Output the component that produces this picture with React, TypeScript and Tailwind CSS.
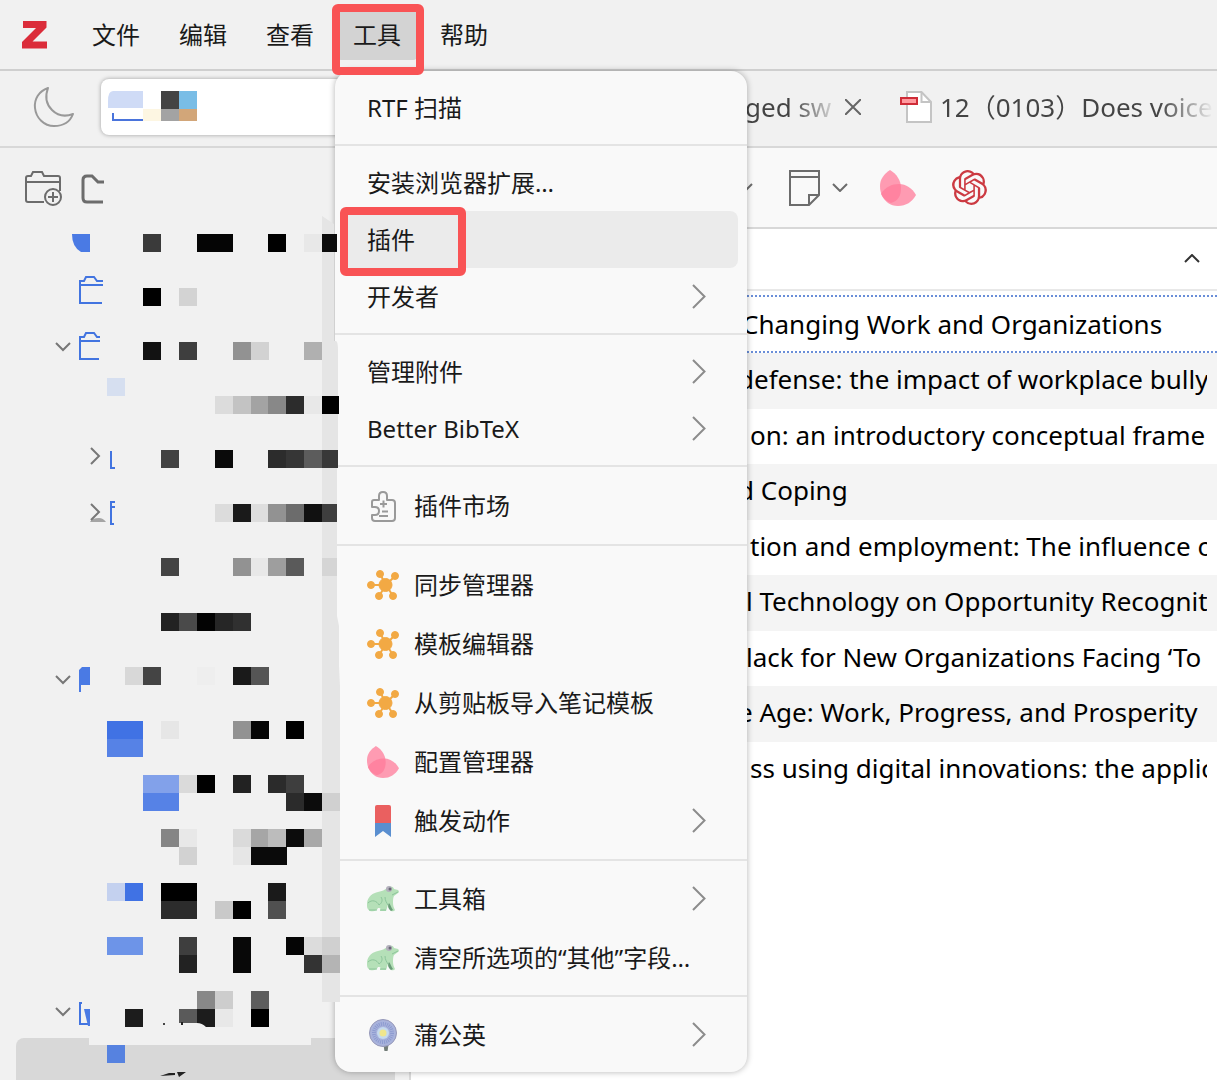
import React from "react";
import { SiOpenai } from "react-icons/si";

type Block = [number, number, number, number, string];
type TreeRow = { chevron?: "down" | "right"; cx?: number; cy?: number; blocks: Block[]; art?: React.ReactNode };

const FONT = "font-['Noto_Sans','Noto_Sans_CJK_SC',sans-serif]";

function ZLogo() {
  return (
    <svg width="26" height="28" viewBox="0 0 26 28" aria-label="Zotero" role="img">
      <path d="M1 0H24.500V6.500L10.500 20.500H25V27.500H0V21L14 7H1Z" fill="#db2c3a" />
    </svg>
  );
}

function Moon() {
  return (
    <svg width="42" height="42" viewBox="0 0 42 42" fill="none" stroke="#999" strokeWidth="2" strokeLinejoin="round">
      <path d="M15 2C6 5 1 13 2 22C3 32 11 40 21 40C30 40 37 36 40 28C32 31 25 30 19 24C13 18 12 10 15 2Z" />
    </svg>
  );
}

function NewCollection() {
  return (
    <svg width="40" height="36" viewBox="0 0 40 36" fill="none" stroke="#6c6c6c" strokeWidth="2">
      <path d="M20 31H4Q2 31 2 29V7Q2 5 4 5H7L9 1H18L20 5H34Q36 5 36 7V20M2 11H36" />
      <circle cx="29" cy="26" r="8" />
      <path d="M29 21V31M24 26H34" />
    </svg>
  );
}

function FolderPart() {
  return (
    <svg width="24" height="30" viewBox="0 0 24 30" fill="none" stroke="#6c6c6c" strokeWidth="3">
      <path d="M22 28H6Q2 28 2 24V6Q2 2 6 2H11L17 8H23" />
    </svg>
  );
}

function PdfIcon() {
  return (
    <svg width="32" height="32" viewBox="0 0 32 32">
      <path d="M7 1H21.500L31 11V31H7Z" fill="#fff" stroke="#c4c4c4" strokeWidth="2" />
      <path d="M21.500 1V11H31" fill="none" stroke="#c4c4c4" strokeWidth="2" />
      <rect x="1" y="7" width="16" height="6" fill="#ff9a9f" stroke="#cf2c38" strokeWidth="2" />
    </svg>
  );
}

function NoteIcon() {
  return (
    <svg width="31" height="36" viewBox="0 0 31 36" fill="none" stroke="#6c6c6c" strokeWidth="2">
      <path d="M1 1H30V25L20 35H1ZM1 7H30M20 35V25H30" />
    </svg>
  );
}

function Petals({ className }: { className: string }) {
  return (
    <svg className={className} viewBox="0 0 36 36">
      <path d="M10 0C17 4 21 11 21 18C21 26 18 31 11 33C3 30 0 24 0 16C0 9 4 4 10 0Z" fill="#ff7b9a" fillOpacity="0.75" />
      <path d="M36 25C32 32 26 36 18 36C10 36 5 32 1 24C5 17 12 14 19 14C26 14 32 18 36 25Z" fill="#ff7b9a" fillOpacity="0.75" />
    </svg>
  );
}

function Hub() {
  return (
    <svg width="32" height="32" viewBox="0 0 32 32" fill="#f2a944" stroke="#f2a944">
      <path d="M19 16L4 16M19 16L13 5M19 16L28 7M19 16L12 27M19 16L26 27" strokeWidth="2" />
      <circle cx="18.500" cy="16" r="6.500" />
      <circle cx="4" cy="16" r="3.500" />
      <circle cx="13" cy="5" r="3.500" />
      <circle cx="28" cy="7" r="3.500" />
      <circle cx="12" cy="27" r="3.500" />
      <circle cx="26" cy="27" r="3.500" />
    </svg>
  );
}

function Puzzle() {
  return (
    <svg width="32" height="32" viewBox="0 0 32 32" fill="none" stroke="#9a9a9a" strokeWidth="2" strokeLinejoin="round">
      <path d="M7 10H12V6Q12 2 16 2Q20 2 20 6V10H25Q28 10 28 13V28Q28 31 25 31H8Q5 31 5 28V25H8Q12 25 12 21Q12 17 8 17H5V12Q5 10 7 10Z" />
      <path d="M13 14H20M16.500 10.500V17.500M15 21.500H21M12 26H21" />
    </svg>
  );
}

function Bookmark() {
  return (
    <svg width="32" height="32" viewBox="0 0 32 32">
      <path d="M10 0H22Q24 0 24 2V18H8V2Q8 0 10 0Z" fill="#ea6060" />
      <path d="M8 18H24V32L16 26L8 32Z" fill="#5a8fd0" />
    </svg>
  );
}

function Frog() {
  return (
    <svg width="32" height="32" viewBox="0 0 32 32">
      <path d="M0 20C1 13 6 10 11 9C15 8 18 7 20 5C22 3 26 3 27 6L31 7Q33 9 31 10L27 13C26 15 26 17 26 20C26 23 27 25 28 27Q27 29 24 28C22 26 21 24 21 22C20 24 20 26 19 28H13C14 26 14 25 11 25C10 27 8 29 3 28C1 27 0 25 0 23Z" fill="#b5e0b8" />
      <path d="M1 20C5 16 10 18 12 22M12 22C15 20 16 17 14 14M18 14C18 18 20 20 21 22M2 27H10M13 27H19M25 12L31 9" fill="none" stroke="#8cc59a" strokeWidth="1" />
      <path d="M22 20C24 22 24 25 26 27L24 28C22 26 20 24 22 20Z" fill="#6a9c78" />
      <circle cx="22" cy="6" r="3" fill="#b3b0bc" />
      <circle cx="23" cy="6" r="1.500" fill="#6c6878" />
    </svg>
  );
}

function Dandelion() {
  return (
    <svg width="32" height="32" viewBox="0 0 32 32">
      <path d="M17 26L18 32H20L21 26Z" fill="#737d78" stroke="#737d78" />
      <circle cx="16" cy="14" r="13.500" fill="#a9b3dc" stroke="#9698b8" />
      <circle cx="16" cy="14" r="9" fill="none" stroke="#8d9bd0" strokeWidth="4" strokeDasharray="1 1" />
      <circle cx="16" cy="14" r="6" fill="#c5daee" />
      <circle cx="16" cy="14" r="3.500" fill="#f0e68c" />
    </svg>
  );
}

function Chevron({ dir, className }: { dir: "right" | "down" | "up"; className?: string }) {
  if (dir === "right")
    return (
      <svg className={className} width="14" height="25" viewBox="0 0 14 25" fill="none" stroke="currentColor" strokeWidth="2">
        <path d="M1 1L12.500 12.500L1 24" />
      </svg>
    );
  return (
    <svg className={className} width="16" height="9" viewBox="0 0 16 9" fill="none" stroke="currentColor" strokeWidth="2">
      <path d={dir === "down" ? "M1 1L8 8L15 1" : "M1 8L8 1L15 8"} />
    </svg>
  );
}

const folder = (y: number, w: number) => (
  <path d={`M${78 + w} ${y + 27}H80V${y + 5}H84L86 ${y + 1}H94L97 ${y + 5}H${79 + w}M80 ${y + 9}H${79 + w}`} fill="none" stroke="#4274e0" strokeWidth="2" />
);

const TREE: TreeRow[] = [
  { blocks: [[143, 18, 18, 18, "#3a3a3a"], [197, 18, 36, 18, "#050505"], [268, 18, 18, 18, "#000"], [304, 18, 18, 18, "#e8e8e8"], [322, 18, 15, 18, "#0c0c0c"]], art: <path d="M72 18H90V36H81Q72 31 72 18Z" fill="#4a7ae4" /> },
  { blocks: [[143, 18, 18, 18, "#000"], [179, 18, 18, 18, "#d3d3d3"]], art: folder(6, 24) },
  { chevron: "down", cx: 63, cy: 22, blocks: [[143, 18, 18, 18, "#121212"], [179, 18, 18, 18, "#3e3e3e"], [233, 18, 18, 18, "#929292"], [251, 18, 18, 18, "#d2d2d2"], [304, 18, 18, 18, "#b0b0b0"]], art: folder(8, 21) },
  { blocks: [[107, 0, 18, 18, "#d6dff0"], [215, 18, 18, 18, "#dcdcdc"], [233, 18, 18, 18, "#c3c3c3"], [251, 18, 18, 18, "#a3a3a3"], [268, 18, 18, 18, "#888"], [286, 18, 18, 18, "#2c2c2c"], [304, 18, 18, 18, "#e8e8e8"], [322, 18, 17, 18, "#000"]] },
  { chevron: "right", cx: 95, cy: 24, blocks: [[161, 18, 18, 18, "#424242"], [215, 18, 18, 18, "#0a0a0a"], [268, 18, 18, 18, "#2c2c2c"], [286, 18, 18, 18, "#363636"], [304, 18, 18, 18, "#5c5c5c"], [322, 18, 16, 18, "#383838"]], art: <path d="M111 19V36H115" fill="none" stroke="#4274e0" strokeWidth="2" /> },
  { chevron: "right", cx: 95, cy: 26, blocks: [[215, 18, 18, 18, "#dcdcdc"], [233, 18, 18, 18, "#1a1a1a"], [251, 18, 18, 18, "#dedede"], [268, 18, 18, 18, "#929292"], [286, 18, 18, 18, "#6c6c6c"], [304, 18, 18, 18, "#111"], [322, 18, 15, 18, "#3e3e3e"]], art: <><path d="M115 16H111V38H114M111 21H115" fill="none" stroke="#4274e0" strokeWidth="2" /><path d="M90 36Q92 32 99 32Q103 32 106 36Z" fill="#a5a5a5" /></> },
  { blocks: [[161, 18, 18, 18, "#444"], [233, 18, 18, 18, "#929292"], [251, 18, 18, 18, "#e8e8e8"], [268, 18, 18, 18, "#9e9e9e"], [286, 18, 18, 18, "#5a5a5a"], [322, 18, 15, 18, "#d5d5d5"]] },
  { blocks: [[161, 19, 18, 18, "#222"], [179, 19, 18, 18, "#4a4a4a"], [197, 19, 18, 18, "#030303"], [215, 19, 18, 18, "#262626"], [233, 19, 18, 18, "#303030"]] },
  { chevron: "down", cx: 63, cy: 31, blocks: [[125, 19, 18, 18, "#d8d8d8"], [143, 19, 18, 18, "#444"], [197, 19, 18, 18, "#eee"], [233, 19, 18, 18, "#1a1a1a"], [251, 19, 18, 18, "#555"]], art: <path d="M79 44V22L82 19H90V37H81V44Z" fill="#4a7ae4" /> },
  { blocks: [[107, 19, 36, 18, "#4072e4"], [107, 37, 36, 18, "#5682e6"], [161, 19, 18, 18, "#e6e6e6"], [233, 19, 18, 18, "#929292"], [251, 19, 18, 18, "#050505"], [286, 19, 18, 18, "#000"]] },
  { blocks: [[143, 19, 36, 18, "#82a1ea"], [143, 37, 36, 18, "#5682e6"], [179, 19, 18, 18, "#dadada"], [197, 19, 18, 18, "#000"], [233, 19, 18, 18, "#222"], [268, 19, 18, 18, "#2b2b2b"], [286, 19, 18, 18, "#3e3e3e"], [286, 37, 18, 18, "#2b2b2b"], [304, 37, 18, 18, "#0c0c0c"], [322, 37, 18, 18, "#d0d0d0"]] },
  { blocks: [[161, 19, 18, 18, "#858585"], [179, 19, 18, 18, "#e8e8e8"], [179, 37, 18, 18, "#d2d2d2"], [233, 19, 18, 18, "#dadada"], [251, 19, 18, 18, "#a6a6a6"], [268, 19, 18, 18, "#bcbcbc"], [286, 19, 18, 18, "#0c0c0c"], [304, 19, 18, 18, "#a8a8a8"], [233, 37, 18, 18, "#e6e6e6"], [251, 37, 36, 18, "#0a0a0a"]] },
  { blocks: [[107, 19, 18, 18, "#c4d1ef"], [125, 19, 18, 18, "#4072e4"], [161, 19, 36, 18, "#000"], [161, 37, 36, 18, "#2c2c2c"], [215, 37, 18, 18, "#c9c9c9"], [233, 37, 18, 18, "#000"], [268, 19, 18, 18, "#1a1a1a"], [268, 37, 18, 18, "#505050"]] },
  { blocks: [[107, 19, 36, 18, "#6d94e8"], [179, 19, 18, 18, "#3e3e3e"], [179, 37, 18, 18, "#222"], [233, 19, 18, 36, "#080808"], [286, 19, 18, 18, "#050505"], [304, 19, 18, 18, "#dcdcdc"], [322, 19, 18, 18, "#d0d0d0"], [304, 37, 18, 18, "#333"], [322, 37, 18, 18, "#b4b4b4"]] },
  { chevron: "down", cx: 63, cy: 39, blocks: [[125, 37, 18, 18, "#1c1c1c"], [179, 37, 18, 14, "#5a5a5a"], [197, 19, 18, 18, "#888"], [215, 19, 18, 18, "#cdcdcd"], [215, 37, 18, 18, "#e8e8e8"], [251, 19, 18, 18, "#5e5e5e"], [251, 37, 18, 18, "#000"]], art: <><path d="M82 31H80V52H88" fill="none" stroke="#4274e0" strokeWidth="2" /><path d="M84 37H90V54H88Z" fill="#4a7ae4" /><path d="M197 37H215V55H206Q202 51 197 51Z" fill="#1c1c1c" /><rect x="163" y="51" width="2" height="2" fill="#444" /><rect x="181" y="50" width="2" height="3" fill="#222" /></> },
];

type Item = { label: string; icon?: React.ReactNode; sub?: boolean; active?: boolean };
type Group = { roomy?: boolean; items: Item[] };

const GROUPS: Group[] = [
  { items: [{ label: "RTF 扫描" }] },
  { items: [{ label: "安装浏览器扩展…" }, { label: "插件", active: true }, { label: "开发者", sub: true }] },
  { items: [{ label: "管理附件", sub: true }, { label: "Better BibTeX", sub: true }] },
  { roomy: true, items: [{ label: "插件市场", icon: <Puzzle /> }] },
  {
    roomy: true,
    items: [
      { label: "同步管理器", icon: <Hub /> },
      { label: "模板编辑器", icon: <Hub /> },
      { label: "从剪贴板导入笔记模板", icon: <Hub /> },
      { label: "配置管理器", icon: <Petals className="size-8" /> },
      { label: "触发动作", icon: <Bookmark />, sub: true },
    ],
  },
  { items: [{ label: "工具箱", icon: <Frog />, sub: true }, { label: "清空所选项的“其他”字段…", icon: <Frog /> }] },
  { items: [{ label: "蒲公英", icon: <Dandelion />, sub: true }] },
];

const TITLES: { text: string; indent: string }[] = [
  { text: "Changing Work and Organizations", indent: "pl-1" },
  { text: "defense: the impact of workplace bully", indent: "pl-0" },
  { text: "on: an introductory conceptual frame", indent: "pl-3" },
  { text: "d Coping", indent: "pl-0" },
  { text: "tion and employment: The influence o", indent: "pl-3" },
  { text: "l Technology on Opportunity Recognit", indent: "pl-2" },
  { text: "lack for New Organizations Facing ‘To", indent: "pl-2" },
  { text: "e Age: Work, Progress, and Prosperity", indent: "pl-0" },
  { text: "ss using digital innovations: the applic", indent: "pl-3" },
];

function ToolsMenu() {
  return (
    <div role="menu" aria-label="工具" className="absolute left-[335px] top-[71px] z-10 w-[412px] divide-y-2 divide-[#e4e4e4] rounded-2xl bg-[#f9f9f9] shadow-[0_0_6px_rgba(0,0,0,0.3)]">
      {GROUPS.map((g, i) => (
        <div key={i} className={g.roomy ? "py-[9px]" : "py-2"}>
          {g.items.map((it) => (
            <button
              key={it.label}
              role="menuitem"
              className={`mx-2 flex w-[395px] items-center gap-[15px] rounded-lg pl-6 pr-8 text-left text-2xl text-[#1a1a1a] ${it.icon ? "h-[59px]" : "h-[57px]"} ${it.active ? "bg-[#ebebeb]" : ""}`}
            >
              {it.icon}
              <span className="flex-1 whitespace-nowrap">{it.label}</span>
              {it.sub && <Chevron dir="right" className="text-[#8c8c8c]" />}
            </button>
          ))}
        </div>
      ))}
    </div>
  );
}

function Sidebar() {
  return (
    <aside className="w-[411px] shrink-0 border-r-2 border-[#dadada]">
      <div className="flex h-[68px] items-center gap-[17px] pl-6 pt-[14px]">
        <button aria-label="新建分类"><NewCollection /></button>
        <button aria-label="新建文库"><FolderPart /></button>
      </div>
      <ul className="relative z-20 w-[340px]">
        <svg className="absolute left-0 top-0" width="342" height="790" aria-hidden="true">
          <path d="M322 0L334 8V125H336Q338 125 338 135V240L337 246V400L339 410V450L340 470V786H322Z" fill="#e5e5e5" />
        </svg>
        {TREE.map((row, i) => (
          <li key={i} className="relative h-[54px]">
            <svg className="block overflow-visible" width="340" height="54" aria-hidden="true">
              {row.blocks.map(([x, y, w, h, c], j) => (
                <rect key={j} x={x} y={y} width={w} height={h} fill={c} />
              ))}
              {row.art}
              {row.chevron && row.cx !== undefined && row.cy !== undefined && (
                <path
                  d={row.chevron === "down" ? `M${row.cx - 7} ${row.cy - 3}l7 7l7 -7` : `M${row.cx - 4} ${row.cy - 8}l8 8l-8 8`}
                  fill="none"
                  stroke="#777"
                  strokeWidth="2"
                />
              )}
            </svg>
          </li>
        ))}
      </ul>
      <div className="ml-4 mr-3.5 mt-3 h-[42px] rounded-tl-lg bg-[#d8d8d8]">
        <svg className="block" width="320" height="42" aria-hidden="true">
          <rect x="73" y="0" width="222" height="7" fill="#f1f1f1" />
          <rect x="91" y="7" width="18" height="18" fill="#5682e0" />
          <path d="M144 38L153 35H159V37ZM161 34L170 34L163 39Z" fill="#222" />
        </svg>
      </div>
    </aside>
  );
}

function Items() {
  return (
    <main className="min-w-0 flex-1 bg-white">
      <div className="flex h-[81px] items-center border-b-2 border-[#d8d8d8] bg-[#f9f9f9] pl-[326px]">
        <button aria-label="更多" className="text-[#6c6c6c]"><Chevron dir="down" /></button>
        <button aria-label="新建笔记" className="ml-9 flex items-center gap-3 text-[#6c6c6c]">
          <NoteIcon />
          <Chevron dir="down" />
        </button>
        <button aria-label="样式" className="ml-8"><Petals className="size-9" /></button>
        <button aria-label="GPT" className="ml-9"><SiOpenai className="size-[35px] text-[#cc3a42]" /></button>
      </div>
      <table className="w-full table-fixed border-collapse">
        <thead>
          <tr className="h-[61px] border-b-2 border-[#e8e8e8]">
            <th className="pb-1 pr-[17px] text-right">
              <button aria-label="标题排序"><Chevron dir="up" className="text-[#333]" /></button>
            </th>
          </tr>
        </thead>
        <tbody className="text-[26px] leading-9 text-black">
          {TITLES.map((t, i) => (
            <tr key={t.text} className={i % 2 ? "h-14 bg-[#f4f4f4]" : "h-[55px]"}>
              <td className={i === 0 ? "pt-1" : "pb-1"}>
                <div className={`pl-[327px] pr-2.5 ${i === 0 ? "border-y-2 border-dotted border-[#6a8ed8] py-[9px]" : ""}`}>
                  <div className={`overflow-hidden whitespace-nowrap ${t.indent}`}>{t.text}</div>
                </div>
              </td>
            </tr>
          ))}
        </tbody>
      </table>
    </main>
  );
}

export default function App() {
  return (
    <div className={`relative flex h-screen min-h-[1080px] flex-col overflow-hidden bg-[#f1f1f1] ${FONT}`}>
      <nav className="flex h-[71px] shrink-0 items-center border-b-2 border-[#cfcfcf] pl-[22px] text-2xl text-[#1a1a1a]">
        <ZLogo />
        <div className="ml-7 flex gap-[7px]">
          {["文件", "编辑", "查看", "工具", "帮助"].map((m) => (
            <button key={m} className={`relative h-[50px] rounded px-4 ${m === "工具" ? "bg-[#d3d3d3]" : ""}`}>
              {m}
              {m === "工具" && <span className="absolute -bottom-[15px] -left-[5px] -right-[7px] -top-[6px] z-30 rounded-md border-8 border-[#f95355]" />}
            </button>
          ))}
        </div>
      </nav>
      <div className="flex h-[77px] shrink-0 items-center border-b-2 border-[#d8d8d8] pb-[3px] text-2xl text-[#555]">
        <button aria-label="深色模式" className="ml-[33px]"><Moon /></button>
        <button aria-label="我的文库" className="ml-[26px] flex h-[56px] w-[280px] items-center rounded-lg bg-white shadow-[0_0_4px_rgba(0,0,0,0.35)]">
          <svg width="100" height="36" aria-hidden="true">
            <path d="M12 2H42V19H7V12Q7 2 12 2Z" fill="#cfdbf6" />
            <path d="M12 24V31H42" fill="none" stroke="#4a74dc" strokeWidth="2" />
            <rect x="42" y="20" width="18" height="12" fill="#fdf6e2" />
            <rect x="60" y="2" width="18" height="18" fill="#444" />
            <rect x="78" y="2" width="18" height="18" fill="#79bde6" />
            <rect x="60" y="20" width="18" height="12" fill="#a3a3a3" />
            <rect x="78" y="20" width="18" height="12" fill="#d2a679" />
          </svg>
        </button>
        <div className="ml-[364px] flex items-center whitespace-nowrap">
          <span className="w-[90px] overflow-hidden bg-gradient-to-r from-[#444] from-50% to-[#ddd] bg-clip-text text-[26px] text-transparent">ged sw</span>
        </div>
        <button aria-label="关闭标签页" className="ml-2.5">
          <svg width="16" height="16" viewBox="0 0 16 16" stroke="#666" strokeWidth="2"><path d="M0 0L16 16M16 0L0 16" /></svg>
        </button>
        <div className="ml-[39px] flex min-w-0 flex-1 items-center gap-2">
          <span className="shrink-0"><PdfIcon /></span>
          <span className="overflow-hidden whitespace-nowrap bg-gradient-to-r from-[#444] from-80% to-[#eee] bg-clip-text text-[26px] text-transparent">12（0103）Does voice</span>
        </div>
      </div>
      <div className="flex min-h-0 flex-1">
        <Sidebar />
        <Items />
      </div>
      <ToolsMenu />
      <div className="pointer-events-none absolute left-[340px] top-[207px] z-30 h-[69px] w-[126px] rounded-md border-8 border-[#f95355]" />
    </div>
  );
}
